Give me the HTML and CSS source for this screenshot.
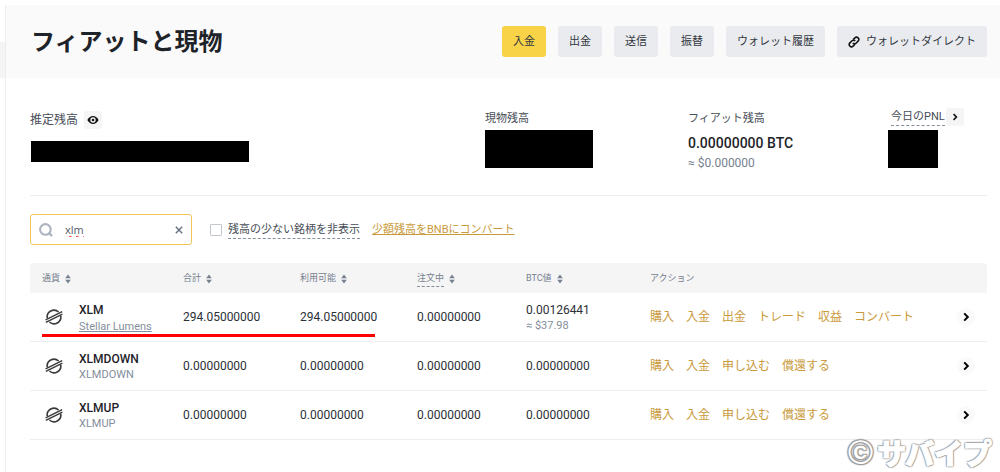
FILE: index.html
```html
<!DOCTYPE html>
<html lang="ja">
<head>
<meta charset="utf-8">
<meta name="viewport" content="width=device-width, initial-scale=1">
<title>フィアットと現物</title>
<link rel="stylesheet" href="styles.css">
</head>
<body>
<svg class="defs" aria-hidden="true">
  <symbol id="sort" viewBox="0 0 6 10"><path d="M3 .6 5.8 4.2H.2ZM3 9.4.2 5.8h5.6Z" fill="currentColor"/></symbol>
  <symbol id="chevron" viewBox="0 0 10 10"><path d="m3.2 1.4 3.6 3.6-3.6 3.6" fill="none" stroke="currentColor" stroke-width="2"/></symbol>
  <symbol id="stellar" viewBox="0 0 18 18">
    <path d="M2.3 10.2A6.8 6.8 0 0 1 13.6 4M15.7 7.8A6.8 6.8 0 0 1 4.4 14" fill="none" stroke="currentColor" stroke-width="1.6"/>
    <path d="M.6 11.8 17.2 3.6M.8 14.4 17.4 6.2" fill="none" stroke="currentColor" stroke-width="1.4"/>
  </symbol>
</svg>
<div class="page">
  <aside class="rail"><div class="rail-item"></div></aside>
  <main class="main">
    <header class="header">
      <h1 class="title">フィアットと現物</h1>
      <nav class="toolbar">
        <button class="btn btn-primary">入金</button>
        <button class="btn">出金</button>
        <button class="btn">送信</button>
        <button class="btn">振替</button>
        <button class="btn">ウォレット履歴</button>
        <button class="btn btn-icon">
          <svg width="12" height="12" viewBox="0 0 12 12" fill="none" stroke="#111" stroke-width="1.5"><path d="M5.2 3.6 6.9 1.9a2.2 2.2 0 0 1 3.2 3.2L8 7.2a2.2 2.2 0 0 1-3.2-.1M6.8 8.4 5.1 10.1a2.2 2.2 0 0 1-3.2-3.2L4 4.8a2.2 2.2 0 0 1 3.2.1"/></svg>
          ウォレットダイレクト
        </button>
      </nav>
    </header>

    <section class="overview">
      <div class="total">
        <div class="total-label">推定残高
          <button class="mini" aria-label="残高を表示"><svg width="12" height="12" viewBox="0 0 12 12"><path d="M.4 6C3.2.6 8.8.6 11.6 6 8.8 11.4 3.2 11.4.4 6Z" fill="currentColor"/><circle cx="6" cy="6" r="2.7" fill="#f5f5f5"/><circle cx="6" cy="6" r="1.3" fill="currentColor"/></svg></button>
        </div>
        <div class="mask mask-total"></div>
      </div>
      <div class="stat">
        <div class="stat-label">現物残高</div>
        <div class="mask mask-spot"></div>
      </div>
      <div class="stat">
        <div class="stat-label">フィアット残高</div>
        <div class="amount">0.00000000 BTC</div>
        <div class="approx">≈ $0.000000</div>
      </div>
      <div class="stat">
        <div class="stat-label pnl"><span class="dashed">今日のPNL</span>
          <button class="mini" aria-label="PNLの詳細"><svg width="8" height="8"><use href="#chevron"/></svg></button>
        </div>
        <div class="mask mask-pnl"></div>
      </div>
    </section>

    <section class="filters">
      <div class="search">
        <svg width="14" height="14" viewBox="0 0 14 14" fill="none" stroke="#adb4c0"><circle cx="6.4" cy="6.4" r="5.3" stroke-width="2.1"/><path d="m10 10 3 3" stroke-width="2.4"/></svg>
        <input class="search-input" type="text" value="xlm" aria-label="銘柄を検索">
        <button class="clear" aria-label="クリア"><svg width="8" height="8" viewBox="0 0 8 8"><path d="m.8.8 6.4 6.4m0-6.4L.8 7.2" stroke="currentColor" stroke-width="1.4"/></svg></button>
      </div>
      <label class="hide-small"><input class="check" type="checkbox"><span class="dashed">残高の少ない銘柄を非表示</span></label>
      <a class="convert" href="#">少額残高をBNBにコンバート</a>
    </section>

    <table class="assets">
      <colgroup><col class="c-coin"><col class="c-num"><col class="c-num"><col class="c-order"><col class="c-btc"><col><col class="c-go"></colgroup>
      <thead>
        <tr>
          <th>通貨<svg class="sort"><use href="#sort"/></svg></th>
          <th>合計<svg class="sort"><use href="#sort"/></svg></th>
          <th>利用可能<svg class="sort"><use href="#sort"/></svg></th>
          <th><span class="dashed">注文中</span><svg class="sort"><use href="#sort"/></svg></th>
          <th>BTC値<svg class="sort"><use href="#sort"/></svg></th>
          <th>アクション</th>
          <th></th>
        </tr>
      </thead>
      <tbody>
        <tr>
          <td class="marked"><div class="coin"><svg width="18" height="18"><use href="#stellar"/></svg><div class="coin-text"><div class="symbol">XLM</div><a class="name" href="#">Stellar Lumens</a></div></div></td>
          <td>294.05000000</td>
          <td>294.05000000</td>
          <td>0.00000000</td>
          <td><div class="coin-text"><div>0.00126441</div><div class="value">≈ $37.98</div></div></td>
          <td><div class="actions"><a href="#">購入</a><a href="#">入金</a><a href="#">出金</a><a href="#">トレード</a><a href="#">収益</a><a href="#">コンバート</a></div></td>
          <td><button class="go" aria-label="詳細"><svg width="10" height="10"><use href="#chevron"/></svg></button></td>
        </tr>
        <tr>
          <td><div class="coin"><svg width="18" height="18"><use href="#stellar"/></svg><div class="coin-text"><div class="symbol">XLMDOWN</div><div class="name">XLMDOWN</div></div></div></td>
          <td>0.00000000</td>
          <td>0.00000000</td>
          <td>0.00000000</td>
          <td>0.00000000</td>
          <td><div class="actions"><a href="#">購入</a><a href="#">入金</a><a href="#">申し込む</a><a href="#">償還する</a></div></td>
          <td><button class="go" aria-label="詳細"><svg width="10" height="10"><use href="#chevron"/></svg></button></td>
        </tr>
        <tr>
          <td><div class="coin"><svg width="18" height="18"><use href="#stellar"/></svg><div class="coin-text"><div class="symbol">XLMUP</div><div class="name">XLMUP</div></div></div></td>
          <td>0.00000000</td>
          <td>0.00000000</td>
          <td>0.00000000</td>
          <td>0.00000000</td>
          <td><div class="actions"><a href="#">購入</a><a href="#">入金</a><a href="#">申し込む</a><a href="#">償還する</a></div></td>
          <td><button class="go" aria-label="詳細"><svg width="10" height="10"><use href="#chevron"/></svg></button></td>
        </tr>
      </tbody>
    </table>
  </main>
  <div class="watermark"><span class="copy">©</span>サバイプ</div>
</div>
</body>
</html>
```

FILE: styles.css
```css
* { box-sizing: border-box; }
body {
  margin: 0;
  background: #fff;
  color: #1e2329;
  font: 12px/16px Roboto, "Noto Sans CJK JP", sans-serif;
}
button { border: 0; padding: 0; font: inherit; color: inherit; }
svg { flex: none; }
a { color: #c99a3c; text-decoration: none; }
.defs { position: absolute; width: 0; height: 0; }

.page { position: relative; display: flex; min-height: 100vh; padding-top: 5px; }
.rail { width: 6px; padding-top: 37px; border-right: 1px solid #eee; }
.rail-item { height: 36px; background: #f4f4f4; }
.main { flex: 1; min-width: 0; }

.header {
  display: flex;
  align-items: center;
  justify-content: space-between;
  height: 73px;
  padding: 0 13px 0 25px;
  background: #fafafa;
}
.title { margin: 0; font-size: 24px; line-height: 32px; font-weight: 700; }
.toolbar { display: flex; gap: 12px; }
.btn {
  height: 31px;
  padding: 0 11px;
  border-radius: 3px;
  background: #eaebef;
  color: #33383f;
  font-size: 11px;
  white-space: nowrap;
}
.btn-primary { background: #f8d347; }
.btn-icon { display: flex; align-items: center; gap: 6px; }

.overview {
  display: grid;
  grid-template-columns: 454px 203px 200px 1fr;
  height: 118px;
  margin: 0 13px 0 24px;
  padding-top: 30px;
  border-bottom: 1px solid #eee;
}
.total { padding-top: 3px; }
.total-label { display: flex; align-items: center; gap: 6px; height: 18px; color: #474d57; }
.mini {
  display: grid;
  place-items: center;
  width: 18px;
  height: 18px;
  border-radius: 3px;
  background: #f5f5f5;
  color: #111;
}
.mask { background: #000; }
.mask-total { width: 218px; height: 21px; margin: 12px 0 0 1px; }
.mask-spot { width: 108px; height: 38px; margin-top: 4px; margin-left: 1px; }
.mask-pnl { width: 50px; height: 38px; margin-top: 4px; margin-left: 1px; }
.stat-label { height: 18px; line-height: 22px; font-size: 11px; color: #474d57; padding-left: 1px; }
.pnl { display: flex; align-items: center; gap: 1px; padding-left: 4px; }
.dashed { border-bottom: 1px dashed #848e9c; line-height: 16px; }
.amount { padding: 7px 0 0 1px; font-size: 14px; line-height: 20px; font-weight: 500; }
.approx { padding: 2px 0 0 1px; font-size: 12px; line-height: 16px; color: #76808f; }

.filters { display: flex; align-items: center; padding: 18px 13px 18px 24px; font-size: 11px; }
.search {
  display: flex;
  align-items: center;
  width: 162px;
  height: 31px;
  padding: 0 8px;
  border: 1px solid #f0c457;
  border-radius: 3px;
}
.search-input {
  flex: 1;
  min-width: 0;
  height: 24px;
  padding: 0 0 0 12px;
  border: 0;
  outline: 0;
  background: none;
  font: 11px/16px "Open Sans", sans-serif;
  color: #555b66;
  text-decoration: underline wavy #e33 1px;
  text-decoration-skip-ink: none;
}
.clear { display: grid; place-items: center; width: 9px; height: 16px; background: none; color: #66707f; }
.hide-small { display: flex; align-items: center; gap: 6px; margin-left: 18px; color: #474d57; }
.hide-small .dashed { padding-top: 2px; }
.check {
  appearance: none;
  width: 12px;
  height: 12px;
  margin: 0;
  border: 1px solid #c3c8d0;
  border-radius: 1px;
}
.convert { margin-left: 12px; text-decoration: underline; }

.assets {
  width: calc(100% - 37px);
  margin-left: 24px;
  table-layout: fixed;
  border-collapse: separate;
  border-spacing: 0;
}
.c-coin { width: 141px; }
.c-num { width: 117px; }
.c-order { width: 109px; }
.c-btc { width: 124px; }
.c-go { width: 42px; }
.assets th {
  height: 30px;
  padding: 0 0 0 12px;
  background: #f5f5f5;
  color: #76808f;
  font-size: 9px;
  font-weight: 400;
  text-align: left;
}
.assets th:first-child { border-radius: 4px 0 0 0; }
.assets th:last-child { border-radius: 0 4px 0 0; }
.assets .dashed { padding-bottom: 3px; }
.sort { width: 6px; height: 10px; margin-left: 5px; vertical-align: middle; }
.assets td { height: 49px; padding: 0 0 0 12px; border-bottom: 1px solid #eee; color: #2b3036; }
.coin { display: flex; align-items: center; gap: 16px; padding-left: 3px; color: #3a3a3a; }
.coin-text { padding-top: 2px; }
.symbol { font-weight: 500; color: #1e2329; }
.name, .assets .value { font-size: 11px; color: #848e9c; }
a.name { text-decoration: underline; }
.actions { display: flex; gap: 12px; white-space: nowrap; }
.go {
  display: grid;
  place-items: center;
  width: 18px;
  height: 18px;
  border-radius: 50%;
  background: #fafafa;
  color: #000;
}
.marked { position: relative; }
.marked::after {
  content: "";
  position: absolute;
  left: 12px;
  bottom: 4px;
  width: 333px;
  height: 3px;
  background: #f00;
}

.watermark {
  position: absolute;
  right: 8px;
  bottom: 4px;
  display: flex;
  align-items: center;
  gap: 4px;
  font: 900 29px/32px "Noto Sans CJK JP", sans-serif;
  color: #fff;
  -webkit-text-stroke: 1px #fff;
  text-shadow: 0 0 2px #999, 1px 1px 1px #999, -1px -1px 1px #999, 1px -1px 1px #999, -1px 1px 1px #999;
}
.copy { font: 700 34px/32px "Liberation Sans", sans-serif; -webkit-text-stroke: 0; }
```
